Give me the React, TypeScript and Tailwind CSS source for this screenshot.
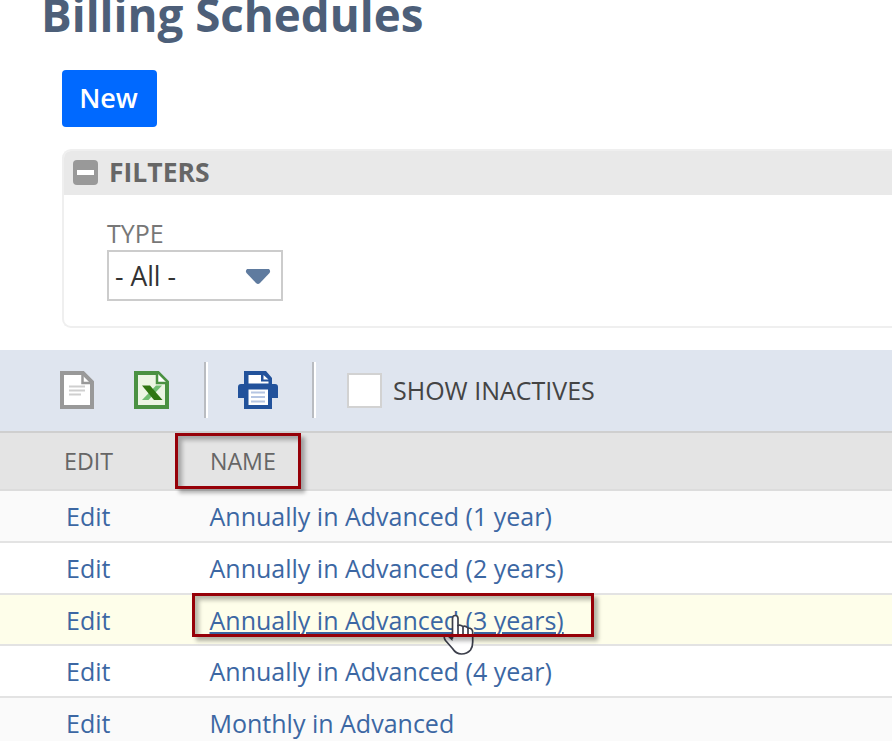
import React from 'react';

const rows = [
  { name: 'Annually in Advanced (1 year)', cls: 'h-[52px] bg-[#fafafa]' },
  { name: 'Annually in Advanced (2 years)', cls: 'h-[52px] bg-white' },
  { name: 'Annually in Advanced (3 years)', cls: 'h-[51px] bg-[#fefeea]', hover: true },
  { name: 'Annually in Advanced (4 year)', cls: 'h-[52px] bg-white' },
  { name: 'Monthly in Advanced', cls: 'h-[52px] bg-[#fafafa]' },
];

function PageIcon() {
  return (
    <svg width="34" height="38" viewBox="0 0 34 38" fill="none">
      <path d="M2 2H23L32 11V36H2Z" fill="#fff" stroke="#999" strokeWidth="4" />
      <path d="M22.500 2V12H32" stroke="#999" strokeWidth="2.500" />
      <path d="M9 15.500H25M9 19.500H25M9 23.500H21" stroke="#cfcfcf" strokeWidth="1.800" />
    </svg>
  );
}

function ExcelIcon() {
  return (
    <svg width="35" height="38" viewBox="0 0 35 38" fill="none">
      <path d="M2 2H24L33 11V36H2Z" fill="#ecf5e4" stroke="#4a9142" strokeWidth="4" />
      <path d="M23 2V12H33" fill="#fff" stroke="#4a9142" strokeWidth="2.500" />
      <path d="M22 14.500H28L14.500 29H8Z" fill="#70bd72" />
      <path d="M8 14.500H16L28.500 29H20Z" fill="#2f7512" />
    </svg>
  );
}

function PrinterIcon() {
  return (
    <svg width="40" height="38" viewBox="0 0 40 38" fill="none">
      <path d="M6 0H28L34 7V13H37Q40 13 40 16V27H34V38H6V27H0V16Q0 13 3 13H6Z" fill="#22529b" />
      <path d="M10.500 4H23V10.500H30.500V12.500H10.500Z" fill="#fff" />
      <path d="M25.500 4L30.500 8.500H25.500Z" fill="#fff" />
      <path d="M10.500 18.500H30V34H10.500Z" fill="#fff" />
      <path d="M13 21.500H27M13 26H27M13 30.500H27" stroke="#b5c5e2" strokeWidth="2" />
    </svg>
  );
}

function HandCursor() {
  return (
    <svg className="absolute left-[443px] top-[614px]" width="32" height="42" viewBox="0 0 32 42" fill="none">
      <path
        d="M9.500 24V4.500Q9.500 1.500 12.200 1.500Q15 1.500 15 4.500V11.500Q17 10.300 20 12.500Q22.500 11.500 25 14Q29.700 14 29.700 18.500V28Q29.700 33 27.500 36Q24 40 18.500 40Q13 40 9.500 34.500L2.500 26.500Q0 22.500 2.500 21.500Q5 20.500 9.500 24Z"
        fill="#fff"
        stroke="#3c3f4b"
        strokeWidth="1.700"
        strokeLinejoin="round"
      />
      <path d="M15 11V20M20 12.500V20M25 14V20" stroke="#3c3f4b" strokeWidth="1.700" />
      <path d="M4 22L9.500 19V27Z" fill="#3c3f4b" />
    </svg>
  );
}

export default function App() {
  return (
    <div className="relative h-[743px] w-[895px] overflow-hidden bg-white font-['Open_Sans','Noto_Sans',sans-serif]">
      <div className="flex h-[741px] w-[892px] flex-col overflow-hidden">
        <header className="flex h-[149px] shrink-0 flex-col items-start gap-[42px]">
          <h1 className="ml-[41px] h-[28px] whitespace-nowrap text-[45.700px] font-bold leading-[28px] text-[#4d5f79]">
            Billing Schedules
          </h1>
          <button className="ml-[62px] flex h-[57px] w-[95px] items-center justify-center rounded-[4px] bg-[#0069ff] pb-[1px] pr-[2px] text-[27px] font-semibold text-white">
            New
          </button>
        </header>

        <section className="ml-[62px] h-[179px] shrink-0 overflow-hidden rounded-l-[9px] border-2 border-r-0 border-[#efefef]">
          <div className="-mx-[2px] -mt-[2px] flex h-[46px] items-center bg-[#e9e9e9] pl-[11px]">
            <span className="flex h-[25px] w-[25px] items-center justify-center rounded-[4px] bg-[#999]">
              <span className="h-[5px] w-[17px] bg-white" />
            </span>
            <span className="ml-[11px] text-[26.500px] font-bold leading-[46px] text-[#666]">FILTERS</span>
          </div>
          <div className="flex flex-col items-start pl-[43px] pt-[19px]">
            <label className="h-[36px] text-[25px] leading-[38px] text-[#777]">TYPE</label>
            <div className="flex h-[51px] w-[176px] items-center justify-between border-2 border-[#ccc] pl-[6px] pr-[10px] pt-[2px] text-[26.500px] text-[#333]">
              <span className="whitespace-nowrap">- All -</span>
              <svg width="26" height="17" viewBox="0 0 26 17">
                <path d="M2 1H24Q26 3 24.500 5L15 15Q13 17 11 15L1.500 5Q0 3 2 1Z" fill="#5f7b9f" />
              </svg>
            </div>
          </div>
        </section>

        <div className="mt-[22px] flex h-[83px] shrink-0 items-center border-b-2 border-[#cfcfcf] bg-[#dfe5ef] pb-[1px] pl-[60px]">
          <PageIcon />
          <span className="w-[40px]" />
          <ExcelIcon />
          <span className="ml-[35px] h-[56px] w-[4px] border-l-2 border-r-2 border-l-[#b9bcc1] border-r-white" />
          <span className="w-[30px]" />
          <PrinterIcon />
          <span className="ml-[34px] h-[56px] w-[4px] border-l-2 border-r-2 border-l-[#b9bcc1] border-r-white" />
          <span className="ml-[31px] h-[35px] w-[35px] border-2 border-[#d2d2d2] bg-white" />
          <span className="ml-[11px] whitespace-nowrap pt-[2px] text-[25px] text-[#444]">SHOW INACTIVES</span>
        </div>

        <div className="flex h-[58px] shrink-0 items-center border-b-2 border-[#dcdcdc] bg-[#e4e4e4] pt-px text-[23.200px] text-[#666]">
          <span className="w-[210px] pl-[64px]">EDIT</span>
          <span>NAME</span>
        </div>

        {rows.map((r) => (
          <div
            key={r.name}
            className={`flex shrink-0 items-center whitespace-nowrap border-b-2 border-[#e3e3e3] pt-[2px] text-[25px] text-[#3c67a3] ${r.cls}`}
          >
            <span className="w-[209.500px] pl-[66px]">Edit</span>
            <span className={r.hover ? 'underline decoration-2 underline-offset-[2px]' : ''}>{r.name}</span>
          </div>
        ))}
      </div>

      <HandCursor />
      <div className="absolute left-[175px] top-[433px] h-[56px] w-[126px] border-[3px] border-[#960008] shadow-[4px_4px_4px_rgba(0,0,0,0.3),inset_4px_4px_4px_rgba(0,0,0,0.28)]" />
      <div className="absolute left-[192px] top-[593px] h-[44px] w-[402px] border-[3px] border-[#960008] shadow-[4px_4px_4px_rgba(0,0,0,0.3),inset_4px_4px_4px_rgba(0,0,0,0.28)]" />
    </div>
  );
}
